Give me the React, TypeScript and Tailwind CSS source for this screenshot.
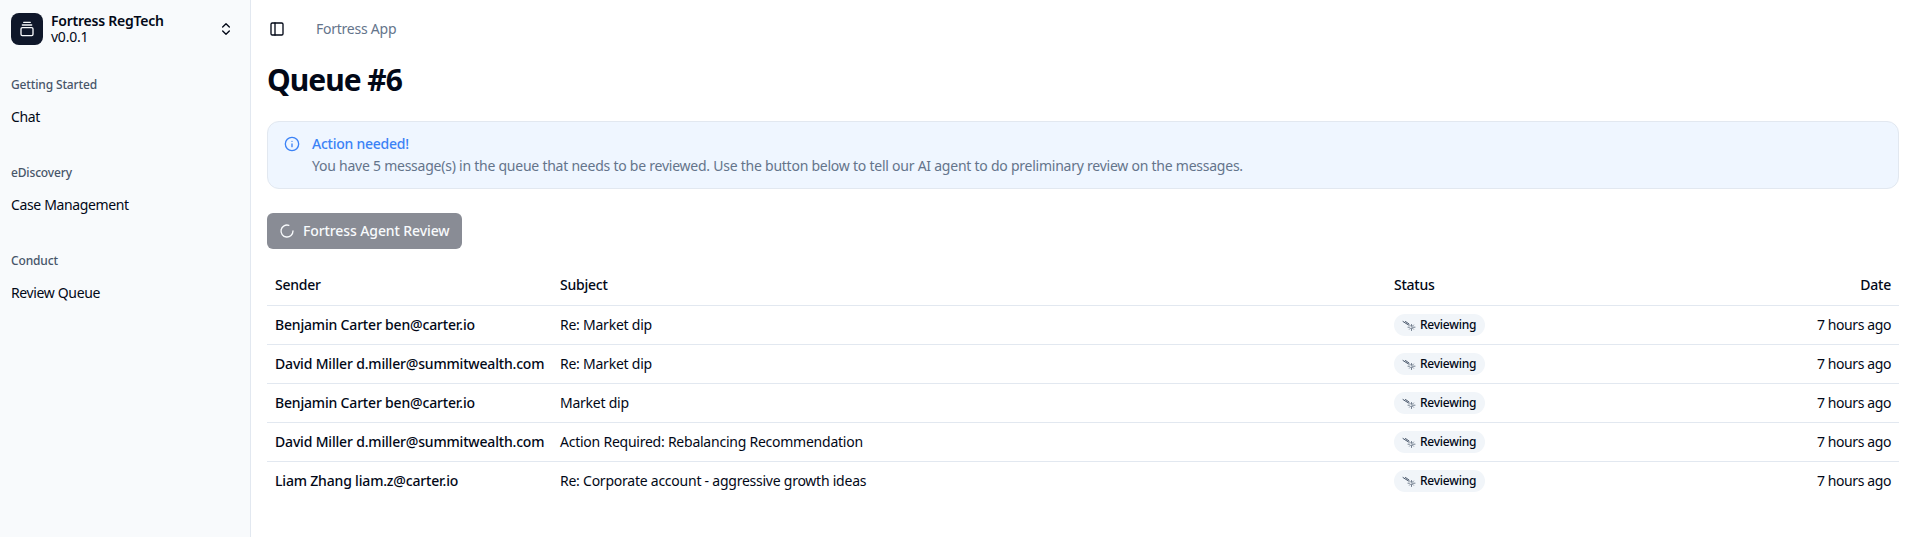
import { ChevronsUpDown, GalleryVerticalEnd, Info, LoaderCircle, PanelLeft } from 'lucide-react';

const font = { fontFamily: '"Noto Sans", sans-serif' };

const navGroups = [
  { label: 'Getting Started', item: 'Chat' },
  { label: 'eDiscovery', item: 'Case Management' },
  { label: 'Conduct', item: 'Review Queue' },
];

const rows = [
  { sender: 'Benjamin Carter ben@carter.io', subject: 'Re: Market dip' },
  { sender: 'David Miller d.miller@summitwealth.com', subject: 'Re: Market dip' },
  { sender: 'Benjamin Carter ben@carter.io', subject: 'Market dip' },
  { sender: 'David Miller d.miller@summitwealth.com', subject: 'Action Required: Rebalancing Recommendation' },
  { sender: 'Liam Zhang liam.z@carter.io', subject: 'Re: Corporate account - aggressive growth ideas' },
];

function ReviewingIcon() {
  return (
    <svg width="14" height="14" viewBox="0 0 14 14" fill="none" stroke="#475569" strokeWidth="1" strokeLinecap="round">
      <path d="M1 3.5l5.5 3.5M3.5 3.5l3.5 2.5" />
      <path d="M9.5 6.5v1.5M9.5 10.5V12.5M10.5 9.2h2.5M6 9.2h1.5M11.5 7l-1.2 1.2M7.5 11.2l1.2-1.2M11.5 11.2l-1.2-1.2M7.5 7l1.2 1.2" strokeOpacity="0.75" />
    </svg>
  );
}

export default function App() {
  return (
    <div className="flex h-[537px] w-full bg-white tracking-[-0.24px] text-[#020817]" style={font}>
      <aside className="w-[251px] shrink-0 border-r border-[#e2e8f0] bg-[#f8fafc] px-[11px] pt-[13px]">
        <div className="flex h-8 items-center">
          <div className="flex size-8 items-center justify-center rounded-lg bg-[#0f172a] text-[#f8fafc]">
            <GalleryVerticalEnd size={16} />
          </div>
          <div className="ml-2 flex-1 text-sm leading-4">
            <div className="font-semibold">Fortress RegTech</div>
            <div>v0.0.1</div>
          </div>
          <ChevronsUpDown size={16} className="mr-[5px]" />
        </div>
        {navGroups.map((g, i) => (
          <div key={g.label} className={i === 0 ? 'mt-8' : 'mt-[38px]'}>
            <div className="text-xs font-medium leading-4 tracking-[-0.15px] text-[#475569]">{g.label}</div>
            <div className="mt-[14px] text-sm leading-5 tracking-[-0.36px]">{g.item}</div>
          </div>
        ))}
      </aside>
      <main className="min-w-0 flex-1 pl-4 pr-[9px]">
        <header className="flex h-[58px] items-center">
          <PanelLeft size={16} className="ml-[2px]" />
          <span className="ml-[31px] text-sm text-[#64748b]">Fortress App</span>
        </header>
        <h1 className="text-3xl font-bold leading-[44px] tracking-[-1px]">Queue #6</h1>
        <div className="mt-[19px] flex h-[68px] rounded-xl border border-[#e2e8f0] bg-[#eff6ff] pl-4 pt-[12px]">
          <Info size={16} className="mt-[2px] text-[#3b82f6]" />
          <div className="ml-3 text-sm">
            <div className="font-medium leading-5 text-[#3b82f6]">Action needed!</div>
            <div className="mt-[2px] leading-5 text-[#64748b]">
              You have 5 message(s) in the queue that needs to be reviewed. Use the button below to tell our AI agent to do preliminary review on the messages.
            </div>
          </div>
        </div>
        <button className="mt-6 flex h-9 items-center gap-2 rounded-md bg-[#898c95] px-3 text-sm font-medium tracking-[-0.1px] text-[#f8fafc]">
          <LoaderCircle size={16} />
          Fortress Agent Review
        </button>
        <table className="mt-4 w-full table-fixed text-sm">
          <thead>
            <tr className="h-10 border-b border-[#e2e8f0] text-left">
              <th className="w-[285px] px-2 font-medium">Sender</th>
              <th className="w-[834px] px-2 font-medium">Subject</th>
              <th className="w-[300px] px-2 font-medium">Status</th>
              <th className="px-2 text-right font-medium">Date</th>
            </tr>
          </thead>
          <tbody>
            {rows.map((r, i) => (
              <tr key={i} className={i < 4 ? 'h-[39px] border-b border-[#e2e8f0]' : 'h-[39px]'}>
                <td className="whitespace-nowrap px-2 font-medium tracking-[-0.18px]">{r.sender}</td>
                <td className="px-2">{r.subject}</td>
                <td className="px-2">
                  <span className="inline-flex h-[22px] translate-y-px items-center gap-1 rounded-full bg-[#f1f5f9] pl-2 pr-[9px] text-xs font-medium">
                    <ReviewingIcon />
                    Reviewing
                  </span>
                </td>
                <td className="px-2 text-right tracking-[-0.4px]">7 hours ago</td>
              </tr>
            ))}
          </tbody>
        </table>
      </main>
    </div>
  );
}
